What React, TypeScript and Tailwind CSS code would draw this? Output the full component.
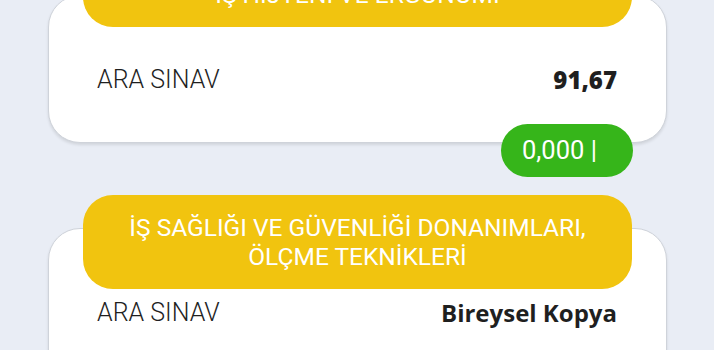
import React from "react";

function Card({
  title,
  right,
  rightClass,
  className,
}: {
  title: React.ReactNode;
  right: string;
  rightClass: string;
  className?: string;
}) {
  return (
    <div
      className={
        "relative rounded-[32px] border border-[#cfd3da] bg-white pl-[48px] pr-[49px] pt-[69px] shadow-[0_2px_3px_rgba(0,0,0,0.10)] " +
        (className ?? "")
      }
    >
      <div className="absolute -top-[34px] left-[34px] right-[34px] rounded-[30px] bg-[#f1c40f] py-[18px] text-center font-['Roboto',sans-serif] text-[24.5px] font-normal leading-[29px] text-white">
        {title}
      </div>
      <div className="flex h-[30px] items-center justify-between">
        <span className="font-['Roboto',sans-serif] text-[25px] font-light text-[#1f1f1f]">ARA SINAV</span>
        <span className={rightClass}>{right}</span>
      </div>
    </div>
  );
}

export default function App() {
  return (
    <div className="h-[350px] overflow-hidden bg-[#e9edf5] pl-[48px] pr-[47px]">
      <div className="-mt-[5px] flex flex-col">
        <Card
          title="İŞ HİJYENİ VE ERGONOMİ"
          right="91,67"
          rightClass="font-['Open_Sans',sans-serif] text-[24px] font-extrabold text-[#1f1f1f]"
          className="pb-[47px]"
        />
        <div className="relative z-10 -mt-[19px] mr-[34px] flex h-[53px] w-[132px] items-center self-end rounded-full bg-[#36b51a] pl-[21px] font-['Roboto',sans-serif] text-[25.5px] font-normal text-white">
          0,000 |
        </div>
        <Card
          title={
            <>
              İŞ SAĞLIĞI VE GÜVENLİĞİ DONANIMLARI,
              <br />
              ÖLÇME TEKNİKLERİ
            </>
          }
          right="Bireysel Kopya"
          rightClass="font-['Open_Sans',sans-serif] text-[24px] font-bold text-[#1f1f1f]"
          className="mt-[51px] pb-[80px]"
        />
      </div>
    </div>
  );
}
